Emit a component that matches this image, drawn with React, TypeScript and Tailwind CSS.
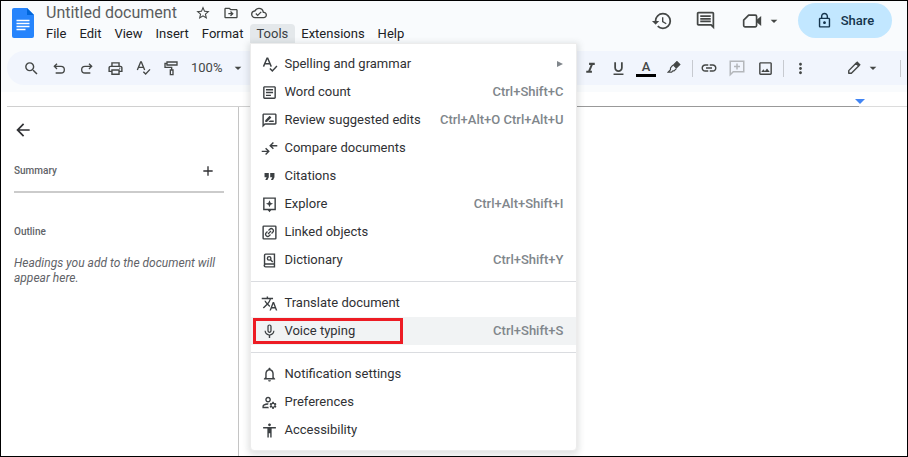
import React from 'react';
import {
  MdAccessibility,
  MdAdd,
  MdArrowBack,
  MdArrowDropDown,
  MdFormatItalic,
  MdFormatQuote,
  MdFormatUnderlined,
  MdHistory,
  MdLink,
  MdMicNone,
  MdMoreVert,
  MdNotificationsNone,
  MdOutlineArticle,
  MdOutlineCloudDone,
  MdOutlineComment,
  MdOutlineDriveFileMove,
  MdOutlineImage,
  MdOutlineLocalPrintshop,
  MdOutlineLock,
  MdOutlineManageAccounts,
  MdOutlineRateReview,
  MdSearch,
  MdStarBorder,
  MdTranslate,
} from 'react-icons/md';

interface IconProps {
  className?: string;
}

interface MenuEntry {
  label: string;
  icon: React.ComponentType<IconProps>;
  shortcut?: string;
  submenu?: boolean;
  active?: boolean;
}

function Svg({ className, children }: React.PropsWithChildren<IconProps>) {
  return (
    <svg viewBox="0 0 24 24" fill="none" stroke="currentColor" strokeWidth="2" className={className} aria-hidden="true">
      {children}
    </svg>
  );
}

function DocsLogo() {
  return (
    <svg viewBox="0 0 22 30" className="h-[30px] w-[22px]" aria-label="Docs home">
      <path fill="#2684fc" d="M2 0h13l7 7v21a2 2 0 0 1-2 2H2a2 2 0 0 1-2-2V2a2 2 0 0 1 2-2z" />
      <path fill="#0066da" d="M15 0l7 7h-7z" />
      <path stroke="#fff" strokeWidth="1.3" d="M4.500 12.500h13M4.500 15.500h13M4.500 18.500h13M4.500 21.500h9" />
    </svg>
  );
}

function UndoIcon({ className }: IconProps) {
  return (
    <Svg className={className}>
      <path d="M9 5.500L5 9.500l4 4M5.500 9.500h9.500a5 5 0 0 1 0 10H7" />
    </Svg>
  );
}

function RedoIcon({ className }: IconProps) {
  return (
    <Svg className={className}>
      <path d="M15 5.500l4 4-4 4M18.500 9.500H9a5 5 0 0 0 0 10h8" />
    </Svg>
  );
}

function SpellIcon({ className }: IconProps) {
  return (
    <Svg className={className}>
      <path d="M3.500 15L8.500 3h1l5 12M5.300 11h7.400" />
      <path d="M12.500 17.500l3.500 3.500 6.500-7" />
    </Svg>
  );
}

function PaintIcon({ className }: IconProps) {
  return (
    <Svg className={className}>
      <path d="M6 3h15v4.500H6zM6 5.200H3V11h10v4" />
      <path d="M11 15h4v7h-4z" />
    </Svg>
  );
}

function VideoIcon({ className }: IconProps) {
  return (
    <Svg className={className}>
      <path d="M8 5h8a1.500 1.500 0 0 1 1.500 1.500v11A1.500 1.500 0 0 1 16 19H3.500A1.500 1.500 0 0 1 2 17.500V11z" strokeLinejoin="round" />
      <path fill="currentColor" stroke="none" d="M17 11l6-5v12l-6-5z" />
    </Svg>
  );
}

function HighlightIcon({ className }: IconProps) {
  return (
    <Svg className={className}>
      <path d="M11 7l6-6 5 5-6 6z" fill="currentColor" />
      <path d="M10 7l-4 5v3l-4 4h6l2-2h2l4-4" />
    </Svg>
  );
}

function PencilIcon({ className }: IconProps) {
  return (
    <Svg className={className}>
      <path d="M3 21v-4.500L15.500 4l4.500 4.500L7.500 21z" strokeWidth="2.400" strokeLinejoin="round" />
      <path d="M15 3l2.500-2.500 6 6L21 9z" fill="currentColor" stroke="none" />
    </Svg>
  );
}

function AddCommentIcon({ className }: IconProps) {
  return (
    <Svg className={className}>
      <path d="M3 21V3h18v14H7zM12 6v8M8 10h8" />
    </Svg>
  );
}

function CompareIcon({ className }: IconProps) {
  return (
    <Svg className={className}>
      <path d="M1 16h9M6.500 11.500L11 16l-4.500 4.500M23 8h-9M17.500 3.500L13 8l4.500 4.500" />
    </Svg>
  );
}

function ExploreIcon({ className }: IconProps) {
  return (
    <Svg className={className}>
      <path d="M4 3h16v16H4z" />
      <path fill="currentColor" stroke="none" d="M9 19h6l-3 4zM12 6l1.500 3.500L17 11l-3.500 1.500L12 16l-1.500-3.500L7 11l3.500-1.500z" />
    </Svg>
  );
}

function LinkedIcon({ className }: IconProps) {
  return (
    <Svg className={className}>
      <rect x="3" y="3" width="18" height="18" rx="1" />
      <g strokeWidth="1.700" transform="rotate(-45 12 12)">
        <path d="M11 9H8.500a3 3 0 0 0 0 6H11M13 9h2.500a3 3 0 0 1 0 6H13M9 12h6" />
      </g>
    </Svg>
  );
}

function DictionaryIcon({ className }: IconProps) {
  return (
    <Svg className={className}>
      <path d="M5 19V4.500A1.500 1.500 0 0 1 6.500 3H19v18H6.500a1.500 1.500 0 0 1 0-4H19" />
      <circle cx="11.500" cy="9" r="2.500" />
      <path d="M13.500 11l3 3" />
    </Svg>
  );
}

const MENU_SECTIONS: MenuEntry[][] = [
  [
    { label: 'Spelling and grammar', icon: SpellIcon, submenu: true },
    { label: 'Word count', icon: MdOutlineArticle, shortcut: 'Ctrl+Shift+C' },
    { label: 'Review suggested edits', icon: MdOutlineRateReview, shortcut: 'Ctrl+Alt+O Ctrl+Alt+U' },
    { label: 'Compare documents', icon: CompareIcon },
    { label: 'Citations', icon: MdFormatQuote },
    { label: 'Explore', icon: ExploreIcon, shortcut: 'Ctrl+Alt+Shift+I' },
    { label: 'Linked objects', icon: LinkedIcon },
    { label: 'Dictionary', icon: DictionaryIcon, shortcut: 'Ctrl+Shift+Y' },
  ],
  [
    { label: 'Translate document', icon: MdTranslate },
    { label: 'Voice typing', icon: MdMicNone, shortcut: 'Ctrl+Shift+S', active: true },
  ],
  [
    { label: 'Notification settings', icon: MdNotificationsNone },
    { label: 'Preferences', icon: MdOutlineManageAccounts },
    { label: 'Accessibility', icon: MdAccessibility },
  ],
];

const MENUS = ['File', 'Edit', 'View', 'Insert', 'Format', 'Tools', 'Extensions', 'Help'];

function ToolsMenu() {
  return (
    <div role="menu" className="absolute left-0 top-full z-10 w-[327px] rounded-b border border-[#ececec] bg-white py-1.5 shadow-[0_2px_6px_2px_rgba(60,64,67,0.15)]">
      {MENU_SECTIONS.map((section, i) => (
        <div key={i} className={i > 0 ? 'mt-[7px] border-t border-[#dadce0] pt-[7px]' : ''}>
          {section.map(({ label, icon: Icon, shortcut, submenu, active }) => (
            <button
              key={label}
              role="menuitem"
              className={`relative flex h-7 w-full items-center gap-1.5 pl-2.5 pr-[13px] text-left text-[13px] text-[#303134] ${active ? 'bg-[#f1f3f4]' : ''}`}
            >
              <Icon className="size-[17px] shrink-0 text-[#3c4043]" />
              <span className="grow whitespace-nowrap">{label}</span>
              {shortcut && <span className="whitespace-nowrap font-medium text-[#80868b]">{shortcut}</span>}
              {submenu && (
                <svg viewBox="0 0 6 6" className="size-1.5" aria-hidden="true">
                  <path fill="#80868b" d="M0 0l6 3-6 3z" />
                </svg>
              )}
              {active && <span className="absolute inset-y-px left-0.5 w-[150px] border-3 border-[#ed1c24]" />}
            </button>
          ))}
        </div>
      ))}
    </div>
  );
}

function ToolButton({ label, children }: React.PropsWithChildren<{ label: string }>) {
  return (
    <button aria-label={label} className="flex h-7 w-7 shrink-0 items-center justify-center">
      {children}
    </button>
  );
}

function Separator() {
  return <span className="h-[17px] w-px shrink-0 bg-[#c7cad0]" />;
}

function Header() {
  return (
    <header className="flex h-[50px] items-start bg-[#f9fbfd] pl-[11px] pr-[15px]">
      <a href="#" className="mt-[7px] shrink-0">
        <DocsLogo />
      </a>
      <div className="ml-1.5 pt-px">
        <div className="flex h-[22px] items-center pl-1.5 text-[#444746]">
          <h1 className="whitespace-nowrap text-base text-[#5a5d60]">Untitled document</h1>
          <div className="ml-[18px] flex items-center gap-3">
            <button aria-label="Star"><MdStarBorder className="size-4" /></button>
            <button aria-label="Move"><MdOutlineDriveFileMove className="size-4" /></button>
            <button aria-label="See document status"><MdOutlineCloudDone className="size-4" /></button>
          </div>
        </div>
        <nav className="flex h-[19px] text-[13px] text-[#202124]">
          {MENUS.map((name) => (
            <div key={name} className="relative">
              <button className={`h-[19px] rounded-t pl-1.5 pr-[7px] leading-[19px] ${name === 'Tools' ? 'bg-[#e4e8eb] text-[#3c4043]' : ''}`}>
                {name}
              </button>
              {name === 'Tools' && <ToolsMenu />}
            </div>
          ))}
        </nav>
      </div>
      <div className="ml-auto flex items-center pt-0.5 text-[#444746]">
        <button aria-label="Last edit"><MdHistory className="size-[22px]" /></button>
        <button aria-label="Open comment history" className="ml-[22px]"><MdOutlineComment className="size-[21px]" /></button>
        <button aria-label="Join a call" className="ml-[26px] flex items-center gap-1">
          <VideoIcon className="size-5" />
          <MdArrowDropDown className="size-4" />
        </button>
        <button className="ml-4 flex h-[35px] w-[94px] items-center justify-center gap-2 rounded-full bg-[#c2e7ff] text-[13px] font-medium text-[#15344c]">
          <MdOutlineLock className="size-[17px]" />
          Share
        </button>
      </div>
    </header>
  );
}

function Toolbar() {
  return (
    <div className="bg-[#f9fbfd] pb-[7px] pl-1.5">
      <div className="flex h-[34px] items-center justify-between rounded-l-full bg-[#f1f5fd] pl-2.5 pr-1.5 text-[#444746]">
        <div className="flex items-center">
          <ToolButton label="Search the menus"><MdSearch className="size-[17px]" /></ToolButton>
          <ToolButton label="Undo"><UndoIcon className="size-4" /></ToolButton>
          <ToolButton label="Redo"><RedoIcon className="size-4" /></ToolButton>
          <ToolButton label="Print"><MdOutlineLocalPrintshop className="size-[17px]" /></ToolButton>
          <ToolButton label="Spelling and grammar check"><SpellIcon className="size-4" /></ToolButton>
          <ToolButton label="Paint format"><PaintIcon className="size-4" /></ToolButton>
          <button className="ml-1.5 flex items-center gap-2 text-[13px]">
            100%
            <MdArrowDropDown className="size-4" />
          </button>
        </div>
        <div className="flex items-center">
          <ToolButton label="Italic"><MdFormatItalic className="size-[17px]" /></ToolButton>
          <ToolButton label="Underline"><MdFormatUnderlined className="size-[17px]" /></ToolButton>
          <ToolButton label="Text color">
            <span className="border-b-3 border-black px-1.5 text-[13px] font-medium leading-[15px]">A</span>
          </ToolButton>
          <ToolButton label="Highlight color"><HighlightIcon className="size-3.5" /></ToolButton>
          <span className="w-1" />
          <Separator />
          <span className="w-0.5" />
          <ToolButton label="Insert link"><MdLink className="size-[18px]" /></ToolButton>
          <span className="text-[#b4b7bb]">
            <ToolButton label="Add comment"><AddCommentIcon className="size-[18px]" /></ToolButton>
          </span>
          <ToolButton label="Insert image"><MdOutlineImage className="size-[17px]" /></ToolButton>
          <span className="w-1" />
          <Separator />
          <span className="w-0.5" />
          <ToolButton label="More"><MdMoreVert className="size-[17px]" /></ToolButton>
          <button aria-label="Editing mode" className="ml-[33px] mr-[19px] flex items-center gap-1">
            <PencilIcon className="size-3.5" />
            <MdArrowDropDown className="size-4" />
          </button>
          <Separator />
        </div>
      </div>
    </div>
  );
}

function Ruler() {
  return (
    <div className="flex h-[15px] items-end pl-1.5">
      <span className="h-px w-[243px] bg-[#d0d0d0]" />
      <span className="h-px grow bg-[#999]" />
      <span className="relative h-px w-12 bg-[#dcdcdc]">
        <svg viewBox="0 0 10 5" className="absolute -left-1 bottom-[3px] h-[5px] w-2.5" aria-hidden="true">
          <path fill="#4285f4" d="M0 0h10L5 5z" />
        </svg>
      </span>
    </div>
  );
}

function Outline() {
  return (
    <aside className="w-[238px] shrink-0 border-r border-[#c4c4c4] pl-[13px] pr-3.5 text-[#5f6368]">
      <button aria-label="Close document outline" className="mt-[13px] -ml-px block text-[#303134]">
        <MdArrowBack className="size-5" />
      </button>
      <div className="mt-5 flex h-[23px] items-center justify-between pb-0.5 text-[10px] font-medium">
        <h2>Summary</h2>
        <button aria-label="Add summary" className="mr-2 text-[#303134]">
          <MdAdd className="size-4" />
        </button>
      </div>
      <hr className="mt-2 border-t-2 border-[#cbcbcb]" />
      <h2 className="mt-[31px] text-[10px] font-medium leading-[15px]">Outline</h2>
      <p className="mt-[17px] text-xs italic leading-[15px]">Headings you add to the document will appear here.</p>
    </aside>
  );
}

export default function App() {
  return (
    <div className="flex min-h-screen flex-col border border-black bg-white font-[Roboto,sans-serif]">
      <Header />
      <Toolbar />
      <Ruler />
      <div className="flex grow">
        <Outline />
        <main className="grow" />
      </div>
    </div>
  );
}
